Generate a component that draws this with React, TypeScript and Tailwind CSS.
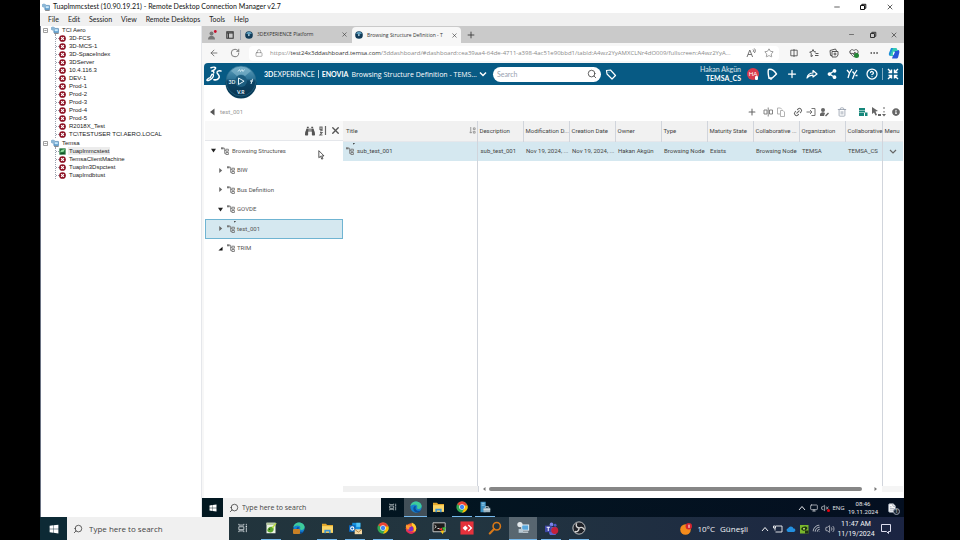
import type { ReactNode } from "react";
import {
  ArrowLeft,
  CircleHelp,
  FileText,
  HeartPulse,
  Link2,
  Lock,
  Minus,
  Monitor,
  MoreHorizontal,
  Plus,
  RotateCw,
  Search,
  Star,
  Trash2,
  Volume2,
  VolumeX,
  Wifi,
  X,
} from "lucide-react";
import { FaBinoculars, FaInfoCircle, FaShareAlt, FaWindows } from "react-icons/fa";

const aeroServers = [
  "3D-FCS",
  "3D-MCS-1",
  "3D-SpaceIndex",
  "3DServer",
  "10.4.116.3",
  "DEV-1",
  "Prod-1",
  "Prod-2",
  "Prod-3",
  "Prod-4",
  "Prod-5",
  "R2018X_Test",
  "TC\\TESTUSER TCI.AERO.LOCAL",
];

const temsaServers = ["Tuaplmmcstest", "TemsaClientMachine", "Tuaplm3Dspctest", "Tuaplmdbtust"];

const structures = [
  { name: "BIW", state: "closed" },
  { name: "Bus Definition", state: "closed" },
  { name: "GOVDE", state: "open" },
  { name: "test_001", state: "closed", selected: true },
  { name: "TRIM", state: "partial" },
];

const columns = [
  "Description",
  "Modification D...",
  "Creation Date",
  "Owner",
  "Type",
  "Maturity State",
  "Collaborative ...",
  "Organization",
  "Collaborative",
];

const cells = [
  "sub_test_001",
  "Nov 19, 2024, ...",
  "Nov 19, 2024, ...",
  "Hakan Akgün",
  "Browsing Node",
  "Exists",
  "Browsing Node",
  "TEMSA",
  "TEMSA_CS",
];

function IconButton({ label, className = "w-5", children }: { label: string; className?: string; children: ReactNode }) {
  return (
    <button type="button" aria-label={label} className={`flex shrink-0 items-center justify-center ${className}`}>
      {children}
    </button>
  );
}

function RestoreIcon() {
  return (
    <svg viewBox="0 0 8 8" className="size-2" fill="none" stroke="currentColor" strokeWidth="1">
      <path d="M1.5 2.5h4v4h-4zM2.8 2.3V1.3h4v4h-1" />
    </svg>
  );
}

function ServerGroupIcon() {
  return (
    <svg viewBox="0 0 10 10" className="size-2 shrink-0">
      <rect x="3.5" y="3" width="6" height="5.5" rx=".5" fill="#5e9fd0" stroke="#3b6f9d" strokeWidth=".6" />
      <rect x="4.5" y="4" width="4" height="2.5" fill="#c9e8fa" />
      <path d="M0 1.5 2.5.5 5 1.8v3L2.5 6 0 4.6z" fill="#8db7d6" />
      <path d="M4 9.5h5.5" stroke="#666" />
    </svg>
  );
}

function StatusIcon({ online }: { online: boolean }) {
  if (online) {
    return (
      <svg viewBox="0 0 10 10" className="size-[7px] shrink-0">
        <rect x=".5" y=".5" width="9" height="9" fill="#21753b" />
        <path d="m1.5 6 2-3 5-1.5-2 4z" fill="#8fdc9d" />
        <path d="m2 8.5 6-1" stroke="#0c3d1d" />
      </svg>
    );
  }
  return (
    <svg viewBox="0 0 10 10" className="size-[7px] shrink-0">
      <circle cx="5" cy="5" r="4.8" fill="#8c1022" />
      <path d="m3 3 4 4m0-4L3 7" stroke="#fff" strokeWidth="1.7" />
    </svg>
  );
}

function ServerGroup({ name, servers, active }: { name: string; servers: string[]; active?: string }) {
  return (
    <li>
      <div className="flex h-2 items-center gap-[3px]">
        <svg viewBox="0 0 5 5" className="size-[5px]" fill="none" stroke="#888" strokeWidth=".8">
          <path d="M.5.5h4v4h-4zM1.3 2.5h2.4" />
        </svg>
        <ServerGroupIcon />
        <span>{name}</span>
      </div>
      <ul className="ml-3 border-l border-dotted border-gray-400">
        {servers.map((server) => (
          <li key={server} className="flex h-2 items-center">
            <span className="w-[3px] border-t border-dotted border-gray-400" />
            <StatusIcon online={server === active} />
            <span className={server === active ? "ml-0.5 bg-[#ececec] px-px leading-[8px]" : "ml-[3px]"}>{server}</span>
          </li>
        ))}
      </ul>
    </li>
  );
}

function Favicon() {
  return (
    <svg viewBox="0 0 10 10" className="size-2 shrink-0">
      <circle cx="5" cy="5" r="4.8" fill="#123c59" />
      <path d="M1.2 3a4.4 4.4 0 0 1 7.6 0L5 4.5z" fill="#5c9dbe" />
      <path d="m4 3.6 2.6 1.5L4 6.6z" fill="#cfe8f4" />
    </svg>
  );
}

function Compass() {
  return (
    <svg viewBox="0 0 32 36" className="h-9 w-8">
      <defs>
        <linearGradient id="compass" x1="0" y1="0" x2="0" y2="1">
          <stop offset="0" stopColor="#5d9fbd" />
          <stop offset=".42" stopColor="#2f7598" />
          <stop offset=".5" stopColor="#0d4668" />
          <stop offset="1" stopColor="#093550" />
        </linearGradient>
      </defs>
      <circle cx="16" cy="20" r="15.5" fill="#073b58" />
      <circle cx="16" cy="18" r="15" fill="url(#compass)" stroke="#2b6b8b" strokeWidth=".6" />
      <path d="M6 8a14 14 0 0 1 20 0l-6 5a7 7 0 0 0-8 0z" fill="#8dbfd4" opacity=".55" />
      <circle cx="16" cy="18" r="6" fill="#1d5e80" />
      <path d="m13.5 15 5.6 3.2-5.6 3.3z" fill="#1b5878" stroke="#e4f3fa" strokeWidth="1" />
      <path d="m13 8.5 1.5-2 1 2 1.5-2 1 2 1.5-2" fill="none" stroke="#d4edf7" strokeWidth=".8" />
      <text x="3.5" y="20.5" fontSize="5" fontWeight="700" fill="#e4f3fa">3D</text>
      <path d="M26 21c1-3 1-5 2-5m-3 2h3" stroke="#e4f3fa" fill="none" />
      <text x="12" y="30.5" fontSize="5" fontWeight="700" fill="#e4f3fa">V.R</text>
    </svg>
  );
}

function DassaultLogo() {
  return (
    <svg viewBox="0 0 20 22" className="h-[17px] w-4" fill="none" stroke="#fff" strokeLinecap="round" strokeLinejoin="round">
      <path d="M6 2.2c3-1.2 6.8-.9 6 .8C11.200 4.800 8.500 6 7 6.600c2.200-.2 3.300.8 2.600 2.400" strokeWidth="1.900" />
      <path d="M7.500 10.500c2.500 0 2.200 2.800.2 5-2 2.300-5.500 4-6.700 3.300-.9-.8 1-2.600 4-3.600l2.500-4.700" strokeWidth="1.700" />
      <path d="M19 6.500c-3.200-.8-5.700.5-4.900 2.500.8 1.800 3.200 3.200 2.700 5.500-.6 2.900-4 4-7 3.200" strokeWidth="2" />
    </svg>
  );
}

function NodeIcon({ flagged }: { flagged?: boolean }) {
  return (
    <svg viewBox="0 0 8 8" className="size-2 shrink-0 overflow-visible" fill="none" stroke="#777" strokeWidth=".9">
      <path d="M0 .3h2.6v2H0z" fill="#777" stroke="none" />
      <path d="M2.5 1.3h1.2v5.200h1M3.700 3.500h1" />
      <path d="M4.900 2.200h2.500v2H4.900zM4.900 5.500h2.500v2H4.900z" />
      {flagged && <path d="M7-4h2L7.500-2.200z" fill="#333" stroke="none" />}
    </svg>
  );
}

function Arrow({ state }: { state: string }) {
  return (
    <svg viewBox="0 0 6 6" className="size-[5px] shrink-0">
      {state === "open" && <path d="M0 1h6L3 5.5z" fill="#222" />}
      {state === "closed" && <path d="M1.5 0 5 3 1.5 6z" fill="#666" />}
      {state === "partial" && <path d="M5.5 1v4.500H.5z" fill="#111" />}
    </svg>
  );
}

function EdgeIcon() {
  return (
    <svg viewBox="0 0 16 16" className="size-3">
      <circle cx="8" cy="8" r="7.5" fill="#1682d0" />
      <path d="M.6 7C1 2.800 4.500.5 8 .5c4.200 0 7.500 2.900 7.500 6.200 0 2.200-1.700 3.800-4 3.800-1.600 0-2.300-.6-2.300-1.200 0-.5.6-.8.6-1.900C9.800 5.700 8 4.500 6 4.500 3.500 4.500 1.500 5.600.6 7z" fill="#3ecb9a" />
      <path d="M6 7c-3 2.500-1.500 7.500 3.500 8.300 2 .2 4-1.100 5.200-2.800-3 1.300-6.800.8-7.300-2.500C7.200 8.800 7.500 8 8 7.500 7.500 6.800 6.700 6.600 6 7z" fill="#0b4f9c" />
    </svg>
  );
}

function ExplorerIcon() {
  return (
    <svg viewBox="0 0 16 14" className="h-[11px] w-[13px]">
      <path d="M1 1h5l1.5 1.5H15V12H1z" fill="#e3a72b" />
      <path d="M1 4h14v8.500H1z" fill="#fcd667" />
      <path d="M4 13V8.500h8V13h-2v-2.200H6V13z" fill="#3f95d2" />
    </svg>
  );
}

function ChromeIcon() {
  return (
    <svg viewBox="0 0 16 16" className="size-3">
      <circle cx="8" cy="8" r="7.5" fill="#34a853" />
      <path d="M8 8 1.5 4.250A7.5 7.5 0 0 1 14.5 4.250z" fill="#ea4335" />
      <path d="M8 8 14.5 4.250A7.5 7.5 0 0 1 8 15.500L11.200 9.800z" fill="#fbbc05" />
      <path d="M8 4.250h6.500L15 6H8z" fill="#ea4335" />
      <circle cx="8" cy="8" r="3.7" fill="#fff" />
      <circle cx="8" cy="8" r="2.9" fill="#4285f4" />
    </svg>
  );
}

function ServerManagerIcon() {
  return (
    <svg viewBox="0 0 16 16" className="size-3">
      <path d="M2 1h7v14H2z" fill="#3a8fc2" />
      <path d="M3.5 3h4M3.5 5.500h4" stroke="#bfe3f6" />
      <path d="M6 9h9v6H6z" fill="#9fb4bf" />
      <path d="M8.5 9V7.500h4V9M6 11.500h9" stroke="#dce6eb" fill="none" />
    </svg>
  );
}

function TaskViewIcon({ className = "size-2.5" }: { className?: string }) {
  return (
    <svg viewBox="0 0 12 12" className={className} fill="none" stroke="#d8dfe2" strokeWidth="1">
      <path d="M1 1v1.500h6V1M1 4.500h6v3.500H1zM1 11V9.500h6V11M10 1v2M10 5.500V11" />
      <path d="M9.200 3.500h1.600v1.500H9.200z" fill="#d8dfe2" stroke="none" />
    </svg>
  );
}

function NotepadIcon() {
  return (
    <svg viewBox="0 0 16 16" className="size-3">
      <path d="M2 1h12v14H2z" fill="#eef4e6" />
      <path d="M2 1h12v3H2z" fill="#b7c9a2" />
      <path d="M3 12c0-4 3-6.500 7.500-5.500 1.500 1.500 1.500 5-.5 6.500-2 1.500-5.500 1-7-1z" fill="#59a52c" />
      <path d="m9 7 5.500-6 1 1-5 6.500z" fill="#b8dd3d" />
      <circle cx="6" cy="9.500" r="1" fill="#1e4210" />
    </svg>
  );
}

function EdgeBadgeIcon() {
  return (
    <span className="relative">
      <EdgeIcon />
      <span className="absolute bottom-0 left-0 h-[5px] w-[7px] rounded-[1px] bg-[#c98025]" />
    </span>
  );
}

function OutlookIcon() {
  return (
    <svg viewBox="0 0 18 16" className="h-[13px] w-[15px]">
      <path d="M5 1h10v9H5z" fill="#1490df" />
      <path d="M10 1h5v5h-5z" fill="#54c6f7" />
      <path d="M1 4h8v8H1z" fill="#0a63b8" />
      <circle cx="5" cy="8" r="2" fill="none" stroke="#fff" strokeWidth="1.3" />
      <path d="M8 9h9v6H8z" fill="#f6d9a6" />
      <path d="m8 9 4.500 3.500L17 9" fill="none" stroke="#a67a38" />
    </svg>
  );
}

function FirefoxIcon() {
  return (
    <svg viewBox="0 0 16 16" className="size-3">
      <circle cx="8" cy="8.5" r="7" fill="#f5612c" />
      <path d="M9 .5c3 1.500 6.500 4 6 8.500-.3 3-2.500 5-5 5.800C13 12 13 7 9 5z" fill="#ffcb2d" />
      <circle cx="7.5" cy="9" r="3.6" fill="#7b2fc4" />
      <path d="M1 6c.5-2 1.500-3 1.500-3l1 1.500C6 4 8 5 9 6.500 6 6 5 8 6 10c-2 .5-4-1-5-4z" fill="#ff9a2e" />
      <path d="M1.200 9c0 4 3 6.500 6.800 6.500 3 0 5-1.500 6-3.500-3 2-9 2-12.800-3z" fill="#e5265b" />
    </svg>
  );
}

function TerminalIcon() {
  return (
    <svg viewBox="0 0 18 16" className="h-[13px] w-[15px]">
      <path d="M1 1h15v11H1z" fill="#1c1c1c" stroke="#c8c8c8" strokeWidth="1.2" />
      <path d="m3 4 2 1.700L3 7.500M6.500 8H9" stroke="#fff" fill="none" />
      <path d="m8 9 4-2 1 4z" fill="#e33" />
      <path d="m12 7 5-1-2 5z" fill="#3cc13b" />
      <path d="m10 11 5-1-2 5z" fill="#f5c518" />
    </svg>
  );
}

function AnyDeskIcon() {
  return (
    <svg viewBox="0 0 16 16" className="size-3.5">
      <path d="M.5.5h15v15H.5z" fill="#e5323c" />
      <path d="m6 5 3 3-3 3-3-3z" fill="#fff" />
      <path d="m9 5 1-1 4 4-4 4-1-1 3-3z" fill="#fff" />
    </svg>
  );
}

function FinderIcon() {
  return (
    <svg viewBox="0 0 16 16" className="size-3.5" fill="none" stroke="#d97817">
      <circle cx="10" cy="6" r="4.2" strokeWidth="1.8" />
      <path d="m7 9.200-5 5" strokeWidth="2.4" strokeLinecap="round" />
    </svg>
  );
}

function RemoteIcon() {
  return (
    <svg viewBox="0 0 16 16" className="size-3.5">
      <path d="M6 4h9v7H6z" fill="#e8f3fa" />
      <path d="M7 5h7v5H7z" fill="#58a7dc" />
      <path d="M8 12h6v1.500H8z" fill="#cfd9df" />
      <circle cx="4.5" cy="4" r="3" fill="#e4eaed" />
      <path d="M3 9h5v4.500H3z" fill="#b9cad5" />
    </svg>
  );
}

function TeamsIcon() {
  return (
    <svg viewBox="0 0 18 16" className="h-[13px] w-[15px]">
      <circle cx="9" cy="3" r="2.3" fill="#7b83eb" />
      <circle cx="13.5" cy="4" r="1.7" fill="#5059c9" />
      <path d="M5 6h10v6a4 4 0 0 1-9 1z" fill="#5b62d0" />
      <path d="M1 4.500h8v8H1z" fill="#4048a8" />
      <path d="M3 6.500h4M5 6.500v4.500" stroke="#fff" strokeWidth="1.2" />
      <circle cx="13" cy="10.5" r="4.3" fill="#c4213a" />
    </svg>
  );
}

function ObsIcon() {
  return (
    <svg viewBox="0 0 16 16" className="size-3.5" fill="none" stroke="#d6d6d6">
      <circle cx="8" cy="8" r="7" fill="#20232a" />
      <path d="M8 8C5 7.500 4 5 5.500 2.800M8 8c2.700-1.500 5.300-.4 6 2M8 8c.2 3-2 4.800-4.800 4" strokeWidth="1.6" />
    </svg>
  );
}

function SearchBox({ id, className, textClass }: { id: string; className: string; textClass: string }) {
  return (
    <label htmlFor={id} className={`flex items-center bg-[#f0f0f0] text-[#333] ${className}`}>
      <Search className="size-2.5 shrink-0 -scale-x-100" strokeWidth={1.8} />
      <input
        id={id}
        type="text"
        placeholder="Type here to search"
        className={`w-full min-w-0 bg-transparent outline-none placeholder:text-[#444] ${textClass}`}
      />
    </label>
  );
}

function TaskButton({ label, running, active, className, children }: {
  label: string;
  running?: boolean;
  active?: boolean;
  className: string;
  children: ReactNode;
}) {
  return (
    <button
      type="button"
      aria-label={label}
      className={`flex h-full shrink-0 flex-col items-center ${active ? "bg-white/25" : ""} ${className}`}
    >
      <span className="flex flex-1 items-center">{children}</span>
      <span className={`h-px ${active ? "w-full" : "w-5"} ${running ? "bg-[#76b9ed]" : ""}`} />
    </button>
  );
}

function ChevronUp() {
  return (
    <svg viewBox="0 0 8 8" className="size-2" fill="none" stroke="currentColor" strokeWidth="1">
      <path d="m1 6 3-3.500L7 6" />
    </svg>
  );
}

function TitleBar() {
  return (
    <div className="flex h-[13px] shrink-0 items-center bg-white pl-0.5 text-[7px] text-[#111]">
      <ServerGroupIcon />
      <h1 className="flex-1 pl-[3px] font-['Lato',sans-serif]">
        Tuaplmmcstest (10.90.19.21) - Remote Desktop Connection Manager v2.7
      </h1>
      <div className="flex">
        <IconButton label="Minimize" className="w-[26px]"><Minus className="size-2" /></IconButton>
        <IconButton label="Restore" className="w-[26px]"><RestoreIcon /></IconButton>
        <IconButton label="Close" className="w-[28px]"><X className="size-2" /></IconButton>
      </div>
    </div>
  );
}

function BrowserTabs() {
  return (
    <div className="flex h-[17px] shrink-0 bg-[#cacaca] font-['Open_Sans',sans-serif] text-[5px] text-[#333]">
      <IconButton label="Profile">
        <svg viewBox="0 0 10 10" className="size-2.5" fill="#777">
          <circle cx="4.5" cy="3.5" r="2" />
          <path d="M1 9.500c0-5 7-5 7 0z" />
          <circle cx="8.3" cy="1.5" r="1.4" fill="#c8102e" />
        </svg>
      </IconButton>
      <IconButton label="Tab actions" className="w-[15px]">
        <svg viewBox="0 0 10 10" className="size-2" fill="none" stroke="#333" strokeWidth="1.3">
          <path d="M1 1h8v8H1zM1 2.500h8M3 2.500V9" />
        </svg>
      </IconButton>
      <div className="flex w-[111px] items-center gap-1 pl-[3px]">
        <span className="h-2.5 w-px bg-gray-400" />
        <Favicon />
        <span className="flex-1 whitespace-nowrap">3DEXPERIENCE Platform</span>
        <IconButton label="Close tab" className="w-2"><X className="size-[7px]" /></IconButton>
      </div>
      <div className="mt-px ml-1 flex w-[109px] items-center gap-1 rounded-t bg-[#f7f7f7] px-[3px]">
        <Favicon />
        <span className="flex-1 whitespace-nowrap">Browsing Structure Definition - T</span>
        <IconButton label="Close tab" className="w-2"><X className="size-[7px]" /></IconButton>
      </div>
      <IconButton label="New tab"><Plus className="size-2.5" /></IconButton>
      <div className="ml-auto flex">
        <IconButton label="Minimize browser" className="w-[21px]"><Minus className="size-[7px]" /></IconButton>
        <IconButton label="Restore browser" className="w-[21px]"><RestoreIcon /></IconButton>
        <IconButton label="Close browser" className="w-[21px]"><X className="size-2" /></IconButton>
      </div>
    </div>
  );
}

function AddressBar() {
  return (
    <div className="flex h-5 shrink-0 items-center bg-[#f7f7f7] pl-0.5 text-[#666]">
      <IconButton label="Back"><ArrowLeft className="size-2.5" /></IconButton>
      <IconButton label="Refresh" className="w-[22px]"><RotateCw className="size-2.5" /></IconButton>
      <div className="ml-[3px] flex h-[15px] min-w-0 flex-1 items-center rounded bg-white px-1">
        <Lock className="ml-0.5 size-2 shrink-0" strokeWidth={1.5} />
        <span className="min-w-0 flex-1 overflow-hidden pl-[7px] font-['Open_Sans',sans-serif] text-[6px] whitespace-nowrap text-[#8a8a8a]">
          https://<span className="text-[#333]">test24x3ddashboard.temsa.com</span>
          /3ddashboard/#dashboard:cea39aa4-64de-4711-a398-4ac51e90bbd1/tabId:A4wz2YyAMXCLNr4dO009/fullscreen:A4wz2YyA...
        </span>
        <IconButton label="Read aloud" className="w-3">
          <svg viewBox="0 0 10 10" className="size-2.5" fill="none" stroke="currentColor" strokeWidth=".9">
            <path d="M1 9 3.800 2 6.600 9M2 6.500h3.600M7 1.500c.8.700.8 1.800 0 2.500M8.300.5c1.300 1.300 1.300 3.200 0 4.500" />
          </svg>
        </IconButton>
        <IconButton label="Add favourite" className="ml-1.5 w-3"><Star className="size-2.5" strokeWidth={1.5} /></IconButton>
      </div>
      <div className="flex pl-[5px] text-[#444]">
        <IconButton label="Split screen">
          <svg viewBox="0 0 10 10" className="size-2" fill="none" stroke="currentColor"><path d="M1 1.500h8v7H1zM5 0v10" /></svg>
        </IconButton>
        <IconButton label="Favourites">
          <svg viewBox="0 0 10 10" className="size-2.5" fill="none" stroke="currentColor" strokeWidth=".9">
            <path d="M7 4 5 3.700 4 1.500 3 3.700.7 4l1.600 1.700L2 8.500l2-1M6.500 5.500H9.500M6 7.500h3.500" />
          </svg>
        </IconButton>
        <IconButton label="Collections">
          <svg viewBox="0 0 10 10" className="size-2.5" fill="none" stroke="currentColor" strokeWidth=".9">
            <path d="M3 7.500H1.500L1 2.500 6.500 1l1 2M3 3.500h6v3.500L7.500 9H3zM4.500 6h3M6 4.500v3" />
          </svg>
        </IconButton>
        <IconButton label="Browser essentials">
          <span className="relative">
            <HeartPulse className="size-2.5" />
            <span className="absolute right-0 bottom-0 size-[5px] rounded-full bg-[#238636]" />
          </span>
        </IconButton>
        <IconButton label="More"><MoreHorizontal className="size-2.5" /></IconButton>
        <IconButton label="Copilot">
          <svg viewBox="0 0 12 12" className="size-3">
            <path d="M3 1h4l-2 8H2.500C1 9 .5 7.500 1 6z" fill="#1b8fd8" />
            <path d="M7 3h3c1.500 0 1.500 1.500 1.200 3l-1 4c-.3 1-1 1.500-2 1.500H4z" fill="#2855d8" />
            <path d="M5 1h3.500L10 4H7L5 9H2z" fill="#35c8b4" />
            <path d="m5.500 4.500 1.300.7L5.700 8l-1-.5z" fill="#fff" />
          </svg>
        </IconButton>
      </div>
    </div>
  );
}

function PlatformHeader() {
  return (
    <header className="relative flex h-[22px] shrink-0 items-center rounded-t bg-[#075a84] pl-0.5 font-['Lato',sans-serif] text-[7px] text-white">
      <DassaultLogo />
      <button type="button" aria-label="Compass" className="absolute top-0 left-[21px] z-10"><Compass /></button>
      <div className="ml-[42px] flex items-center gap-[3px] whitespace-nowrap">
        <span><b>3D</b>EXPERIENCE</span>
        <span className="h-2 w-px bg-white/70" />
        <b>ENOVIA</b>
        <span className="font-['Open_Sans',sans-serif]">Browsing Structure Definition - TEMS...</span>
      </div>
      <IconButton label="Choose dashboard" className="mr-1 w-3">
        <svg viewBox="0 0 8 8" className="size-2" fill="none" stroke="currentColor" strokeWidth="1.5"><path d="m1 2.500 3 3 3-3" /></svg>
      </IconButton>
      <label htmlFor="platform-search" className="flex h-[15px] w-[108px] items-center rounded-full bg-white px-1 text-[#444]">
        <input
          id="platform-search"
          type="text"
          placeholder="Search"
          className="w-full min-w-0 bg-transparent outline-none placeholder:text-gray-400"
        />
        <Search className="size-2.5 shrink-0" />
      </label>
      <IconButton label="Tags">
        <svg viewBox="0 0 12 12" className="size-3" fill="none" stroke="#fff" strokeWidth="1.2" strokeLinejoin="round">
          <path d="M1.500 2.500 5.500 2l5 5.500-3.500 3.500-5-5zM3.800 4.300h.4" />
        </svg>
      </IconButton>
      <div className="ml-auto text-right leading-[9px]">
        <div className="text-white/85">Hakan Akgün</div>
        <div className="font-bold">TEMSA_CS</div>
      </div>
      <span className="relative mr-[3px] ml-1.5 flex size-3 items-center justify-center rounded-full bg-[#d93a4c] text-[6px]">
        HA
        <span className="absolute right-px bottom-0 h-1 w-[3px] rounded-[1px] bg-white" />
      </span>
      <IconButton label="Notifications">
        <svg viewBox="0 0 12 12" className="size-3" fill="none" stroke="#fff" strokeWidth="1.4" strokeLinejoin="round">
          <path d="M2.500 1.500c3-.8 6 1.500 8 4.500l-4 3.800-3.500.5c-.5-3-1.500-6-.5-8.800z" />
          <path d="M4 10.500c.5 1 1.500.8 1.800-.3" />
        </svg>
      </IconButton>
      <IconButton label="Add"><Plus className="size-3" strokeWidth={2.5} /></IconButton>
      <IconButton label="Share">
        <svg viewBox="0 0 12 12" className="size-3" fill="none" stroke="#fff" strokeWidth="1.2" strokeLinejoin="round">
          <path d="M1 10c.5-3 2-5 6-5V2.500L11 6 7 9V7.200C4 7 2.500 8 1 10z" />
        </svg>
      </IconButton>
      <IconButton label="Networks"><FaShareAlt className="size-2.5" /></IconButton>
      <IconButton label="Communities">
        <svg viewBox="0 0 12 12" className="size-3" fill="none" stroke="#fff" strokeWidth="1.3">
          <path d="m1 2 2.500 3L6 1M3.500 5 2 10M6.500 3.500 8.500 6l2.500-4M8.500 6 6.500 11M9.500 7.500h2" />
        </svg>
      </IconButton>
      <IconButton label="Help"><CircleHelp className="size-3" strokeWidth={2.5} /></IconButton>
      <IconButton label="Exit full screen" className="h-3 w-[21px] border-l border-white/50">
        <svg viewBox="0 0 12 12" className="size-3" fill="none" stroke="#fff" strokeWidth="1.4">
          <path d="M1 1l3 3M4.500 1.500v3h-3M11 1 8 4M7.500 1.500v3h3M1 11l3-3M4.500 10.500v-3h-3M11 11 8 8M7.500 10.500v-3h3" />
        </svg>
      </IconButton>
    </header>
  );
}

function Toolbar() {
  return (
    <div className="flex h-[36px] shrink-0 items-end bg-white pb-[3px] text-[#666]">
      <div className="flex h-3 items-center gap-[5px] pl-1.5">
        <IconButton label="Back to parent" className="w-[5px]">
          <svg viewBox="0 0 5 8" className="h-2 w-[5px]"><path d="M4.500.5v7L0 4z" fill="#555" /></svg>
        </IconButton>
        <span className="font-['Roboto',sans-serif] text-[6px] text-[#999]">test_001</span>
      </div>
      <div className="ml-auto flex h-3 items-center">
        <IconButton label="Add item" className="mr-[3px] w-3"><Plus className="size-2.5" strokeWidth={2.5} /></IconButton>
        <IconButton label="Rename" className="w-[13px]">
          <svg viewBox="0 0 10 10" className="size-2.5" fill="none" stroke="#777" strokeWidth=".9">
            <path d="M1 3h3v4H1zM6.500 3h3v4h-3zM5.200.5v9" />
          </svg>
        </IconButton>
        <IconButton label="Duplicate" className="w-[13px]">
          <svg viewBox="0 0 10 10" className="size-2.5" fill="none" stroke="#aaa" strokeWidth=".9">
            <path d="M4 7H1.500V1H4.500L6 2.500M4.500 3.500H7L8.500 5v4.500h-4z" />
          </svg>
        </IconButton>
        <IconButton label="Link" className="ml-1 w-[13px]"><Link2 className="size-2.5 -rotate-45" strokeWidth={2.5} /></IconButton>
        <IconButton label="Insert" className="w-[13px]">
          <svg viewBox="0 0 10 10" className="size-2.5" fill="none" stroke="#777">
            <path d="M5.500 1.500H9v7H5.500M.5 5H6M4 3l2 2-2 2" />
          </svg>
        </IconButton>
        <IconButton label="Assign owner" className="w-[13px]">
          <svg viewBox="0 0 10 10" className="size-2.5" fill="#666">
            <circle cx="4" cy="3" r="2" /><path d="M1 9V7c1-2 4-2 5-1L5 9zM6 8.500l3-3 1 1L7 9.500z" />
          </svg>
        </IconButton>
        <IconButton label="Delete" className="ml-1 w-[15px]"><Trash2 className="size-2.5 text-gray-400" /></IconButton>
        <IconButton label="Table view" className="ml-1.5 w-[15px]">
          <svg viewBox="0 0 10 10" className="size-2.5" fill="#16877b">
            <path d="M1 1h6v2H1zM1 3.500h6v2H1zM1 6h5v3H1zM7 5.500h2.500V9H7z" />
          </svg>
        </IconButton>
        <IconButton label="Selection" className="w-3">
          <svg viewBox="0 0 10 10" className="size-2.5" fill="#666"><path d="m1 0 6 4-2.500.5L6 8 4.500 8.500 3 5.500 1 7z" /><path d="M7 7h3v2H7z" /></svg>
        </IconButton>
        <IconButton label="More commands" className="mr-[3px] w-1">
          <svg viewBox="0 0 4 10" className="h-2.5 w-1" fill="#666"><path d="M1.500 0h1v2h-1zM1.500 4h1v1.500h-1zM0 7h4L2 9.500z" /></svg>
        </IconButton>
        <IconButton label="Information" className="w-[14px]"><FaInfoCircle className="size-2" /></IconButton>
      </div>
    </div>
  );
}

function StructureTree() {
  return (
    <aside className="flex w-[139px] shrink-0 flex-col bg-white pl-px">
      <div className="flex h-5 shrink-0 items-center justify-end border-b border-gray-200 bg-[#f9f9f9] pr-px text-[#555]">
        <IconButton label="Find" className="w-[13px]"><FaBinoculars className="size-2.5" /></IconButton>
        <IconButton label="Sort" className="w-[13px]">
          <svg viewBox="0 0 10 10" className="size-2.5" fill="none" stroke="#666" strokeWidth="1.2">
            <path d="M2 1h2v2.500H2zM4 3.500v1L2 5M2 6.500h2L2 9h2.500M7.500 0v9" />
          </svg>
        </IconButton>
        <IconButton label="Close tree" className="w-[13px]"><X className="size-[11px]" strokeWidth={3} /></IconButton>
      </div>
      <ul className="grid h-[117px] auto-rows-fr font-['Roboto',sans-serif] text-[6px] text-[#555]">
        <li className="flex items-center pl-1.5">
          <Arrow state="open" />
          <span className="w-[5px]" />
          <NodeIcon />
          <span className="pl-[3px]">Browsing Structures</span>
        </li>
        {structures.map((item) => (
          <li
            key={item.name}
            className={`flex items-center border pl-3 ${item.selected ? "border-[#6fb4d2] bg-[#d5e8f0]" : "border-transparent"}`}
          >
            <Arrow state={item.state} />
            <span className="w-1" />
            <NodeIcon flagged={item.selected} />
            <span className="pl-0.5">{item.name}</span>
          </li>
        ))}
      </ul>
    </aside>
  );
}

function StructureTable() {
  return (
    <div className="flex min-w-0 flex-1 flex-col bg-white">
      <table className="w-full flex-1 table-fixed border-collapse text-left font-['Roboto',sans-serif] text-[6px] text-[#444]">
        <colgroup>
          <col />
          {columns.slice(0, 8).map((name) => (
            <col key={name} className="w-[46px]" />
          ))}
          <col className="w-[37px]" />
          <col className="w-[21px]" />
        </colgroup>
        <thead>
          <tr className="h-5 border-b border-gray-200 bg-[#f1f1f1]">
            <th className="pl-[3px] font-normal">
              <div className="flex items-center justify-between pr-px">
                Title
                <svg viewBox="0 0 8 8" className="size-[7px]" fill="none" stroke="#888" strokeWidth=".9">
                  <path d="M2 0v7M.5 5.500 2 7l1.500-1.500M5 1h2v2H5zM5 5h2v2H5z" />
                </svg>
              </div>
            </th>
            {columns.map((name) => (
              <th key={name} className="border-l border-gray-300 pl-0.5 font-normal whitespace-nowrap">
                {name}
              </th>
            ))}
            <th className="border-l border-gray-300 pl-0.5 font-normal">Menu</th>
          </tr>
        </thead>
        <tbody>
          <tr className="h-5 bg-[#d5e8f0]">
            <td className="pl-[3px]">
              <div className="flex items-center gap-[3px]">
                <NodeIcon flagged />
                sub_test_001
              </div>
            </td>
            {cells.map((value, i) => (
              <td key={i} className={`pl-[3px] whitespace-nowrap ${i === 0 ? "border-l border-gray-300" : ""}`}>
                {value}
              </td>
            ))}
            <td className="border-l border-gray-300 text-center">
              <button type="button" aria-label="Row menu">
                <svg viewBox="0 0 8 8" className="size-2" fill="none" stroke="#666" strokeWidth="1.2"><path d="m1 3 3 3 3-3" /></svg>
              </button>
            </td>
          </tr>
          <tr>
            <td />
            <td colSpan={9} className="border-l border-gray-300" />
            <td className="border-l border-gray-300" />
          </tr>
        </tbody>
      </table>
    </div>
  );
}

function HorizontalScroll() {
  return (
    <div className="flex h-3 shrink-0 bg-white">
      <div className="w-[139px] shrink-0" />
      <div className="h-1.5 flex-1 bg-[#f0f0f0]" />
      <div className="flex h-1.5 w-[404px] shrink-0 items-center border-l border-gray-300 pr-1 pl-[3px]">
        <svg viewBox="0 0 4 6" className="h-1.5 w-1"><path d="M3.500 1v4L1 3z" fill="#777" /></svg>
        <span className="ml-[3px] h-1 w-[373px] rounded-full bg-[#868686]" />
        <svg viewBox="0 0 4 6" className="ml-auto h-1.5 w-1"><path d="M.5 1v4L3 3z" fill="#777" /></svg>
      </div>
      <div className="h-1.5 w-[21px] shrink-0 bg-[#f5f5f5]" />
    </div>
  );
}

function RemoteTaskbar() {
  return (
    <div className="flex h-[19px] shrink-0 items-center bg-linear-to-r from-[#021821] to-[#040f20] font-['Open_Sans',sans-serif] text-[6px] text-gray-200">
      <IconButton label="Remote start" className="w-[21px]"><FaWindows className="size-2 text-white" /></IconButton>
      <SearchBox id="remote-search" className="h-full w-[158px] gap-[3px] px-1.5" textClass="text-[7px]" />
      <TaskButton label="Task view" className="w-[23px]"><TaskViewIcon className="size-2" /></TaskButton>
      <TaskButton label="Edge" running active className="w-[23px]"><EdgeIcon /></TaskButton>
      <TaskButton label="File Explorer" className="w-[23px]"><ExplorerIcon /></TaskButton>
      <TaskButton label="Chrome" running className="w-[23px]"><ChromeIcon /></TaskButton>
      <TaskButton label="Server Manager" running className="w-[23px]"><ServerManagerIcon /></TaskButton>
      <div className="ml-auto flex items-center">
        <IconButton label="Show hidden icons" className="w-3"><ChevronUp /></IconButton>
        <IconButton label="Display" className="w-[11px]"><Monitor className="size-2" /></IconButton>
        <IconButton label="Muted" className="relative w-[11px]">
          <VolumeX className="size-2" />
          <span className="absolute right-0 bottom-0 size-[3px] rounded-full bg-red-600" />
        </IconButton>
        <span className="w-[17px] text-center">ENG</span>
        <div className="w-8 text-center font-['Roboto',sans-serif] leading-[8px]">
          <div>08:46</div>
          <div>19.11.2024</div>
        </div>
        <IconButton label="Notifications, 1 new" className="relative w-[25px]">
          <FileText className="size-2.5 fill-white text-gray-400" />
          <span className="absolute right-1 -bottom-0.5 size-[7px] rounded-full border border-gray-400 bg-[#1a2430] text-[5px] leading-[5px]">1</span>
        </IconButton>
      </div>
    </div>
  );
}

function HostTaskbar() {
  return (
    <div className="flex h-[23px] shrink-0 items-center bg-linear-to-r from-[#213339] via-[#223540] to-[#1b2442] font-['Open_Sans',sans-serif] text-gray-100">
      <IconButton label="Start" className="h-full w-[27px] bg-[#0d2a35]"><FaWindows className="size-2.5 text-white" /></IconButton>
      <SearchBox id="host-search" className="h-full w-[162px] gap-1.5 px-1.5" textClass="text-[8px]" />
      <TaskButton label="Task view" className="w-7"><TaskViewIcon /></TaskButton>
      <TaskButton label="Notepad++" running className="w-7"><NotepadIcon /></TaskButton>
      <TaskButton label="Edge" className="w-7"><EdgeBadgeIcon /></TaskButton>
      <TaskButton label="File Explorer" running className="w-7"><ExplorerIcon /></TaskButton>
      <TaskButton label="Outlook" running className="w-7"><OutlookIcon /></TaskButton>
      <TaskButton label="Chrome" running className="w-7"><ChromeIcon /></TaskButton>
      <TaskButton label="Firefox" className="w-7"><FirefoxIcon /></TaskButton>
      <TaskButton label="Terminal" running className="w-7"><TerminalIcon /></TaskButton>
      <TaskButton label="AnyDesk" className="w-7"><AnyDeskIcon /></TaskButton>
      <TaskButton label="Search files" className="w-7"><FinderIcon /></TaskButton>
      <TaskButton label="Remote Desktop Manager" running active className="w-7"><RemoteIcon /></TaskButton>
      <TaskButton label="Teams" running className="w-7"><TeamsIcon /></TaskButton>
      <TaskButton label="OBS" running className="w-7"><ObsIcon /></TaskButton>
      <div className="ml-auto flex items-center">
        <button type="button" className="mr-2.5 flex items-center gap-[5px] text-[8px] whitespace-nowrap">
          <svg viewBox="0 0 12 12" className="size-3">
            <circle cx="5.5" cy="6.5" r="5.3" fill="#f38b1c" />
            <circle cx="8.8" cy="3.3" r="3.2" fill="#d22630" />
            <path d="M9 1.700v3.200" stroke="#fff" />
          </svg>
          <span>10°C</span>
          <span>Güneşli</span>
        </button>
        <IconButton label="Show hidden icons" className="w-[13px]"><ChevronUp /></IconButton>
        <IconButton label="Cast" className="w-[13px]">
          <svg viewBox="0 0 10 10" className="size-2.5" fill="none" stroke="currentColor" strokeWidth=".9">
            <path d="M3 2h6v6H2.500M2 3.500v3M.5 2h2v2h-2z" />
          </svg>
        </IconButton>
        <IconButton label="OneDrive" className="w-[13px]">
          <svg viewBox="0 0 12 8" className="h-2 w-2.5"><path d="M2.500 7.500a2.300 2.300 0 0 1 0-4.500A3.500 3.500 0 0 1 9 3.500a2 2 0 0 1 .5 4z" fill="#2390e0" /></svg>
        </IconButton>
        <IconButton label="Graphics settings" className="w-[13px]">
          <svg viewBox="0 0 10 10" className="size-2.5"><path d="M1 1h8.500v8.500H1z" fill="#79b82c" /><path d="M2 5c2-3 5-3 6.500-1C7 7 4 8 2 5zM6 6.500h3.500v3H6z" fill="#1f3311" /><circle cx="5" cy="4.8" r="1" fill="#b8e86d" /></svg>
        </IconButton>
        <IconButton label="Wi-Fi" className="w-[13px]"><Wifi className="size-2.5 -rotate-45" strokeWidth={1.5} /></IconButton>
        <IconButton label="Volume" className="w-[13px]"><Volume2 className="size-2.5" strokeWidth={1.5} /></IconButton>
        <div className="w-10 text-center font-['Roboto',sans-serif] text-[7px] leading-[10px]">
          <div>11:47 AM</div>
          <div>11/19/2024</div>
        </div>
        <IconButton label="Notifications" className="w-7 pr-2">
          <svg viewBox="0 0 12 12" className="size-3" fill="none" stroke="#dde"><path d="M1.500 1.500h9v7H8.500v2L6.500 8.500h-5z" /></svg>
        </IconButton>
      </div>
    </div>
  );
}

export default function App() {
  return (
    <div className="flex h-screen bg-black pr-14 pl-10 font-['Liberation_Sans',sans-serif] leading-none">
      <div className="flex min-w-0 flex-1 flex-col">
        <TitleBar />
        <nav className="flex h-[13px] shrink-0 items-center gap-[9px] bg-[#f0f0f0] pl-2 font-['Lato',sans-serif] text-[7px] text-[#222]">
          {["File", "Edit", "Session", "View", "Remote Desktops", "Tools", "Help"].map((item) => (
            <button key={item} type="button">{item}</button>
          ))}
        </nav>
        <div className="flex min-h-0 flex-1">
          <aside className="w-[161px] shrink-0 border-l border-gray-500 bg-white pl-0.5 text-[6px] text-[#222]">
            <ul className="flex flex-col gap-px">
              <ServerGroup name="TCI Aero" servers={aeroServers} />
              <ServerGroup name="Temsa" servers={temsaServers} active="Tuaplmmcstest" />
            </ul>
          </aside>
          <div className="flex min-w-0 flex-1 flex-col border-l border-gray-200">
            <BrowserTabs />
            <AddressBar />
            <main className="flex min-h-0 flex-1 flex-col bg-[#f7f7f7] pr-px pl-0.5">
              <PlatformHeader />
              <Toolbar />
              <div className="relative flex min-h-0 flex-1">
                <StructureTree />
                <StructureTable />
                <svg viewBox="0 0 8 12" className="absolute top-[29px] left-[114px] h-2.5 w-[7px]">
                  <path d="M.8.8v8.500l2-1.800L4.300 11l1.400-.6-1.500-3.300H7z" fill="#fff" stroke="#222" strokeWidth=".9" />
                </svg>
              </div>
              <HorizontalScroll />
            </main>
            <RemoteTaskbar />
          </div>
        </div>
        <HostTaskbar />
      </div>
    </div>
  );
}
